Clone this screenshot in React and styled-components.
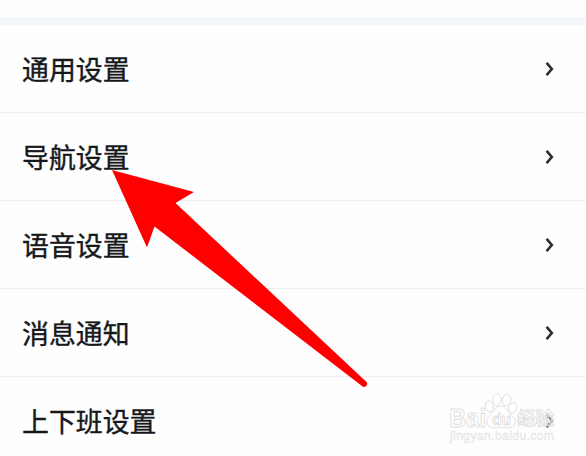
import React from 'react';
import styled, { createGlobalStyle } from 'styled-components';

const GlobalStyle = createGlobalStyle`
  body {
    margin: 0;
    background: #fefefe;
    overflow: hidden;
  }
`

const Page = styled.div`
  position: relative;
  height: 456px;
  overflow: hidden;
  font-family: "Noto Sans CJK SC", sans-serif;
`

const Band = styled.div`
  margin-top: 17px;
  height: 8px;
  background: #f5f8fb;
`

const List = styled.ul`
  margin: 0;
  padding: 0;
  list-style: none;
`

const Row = styled.li`
  display: flex;
  align-items: center;
  justify-content: space-between;
  box-sizing: border-box;
  height: 88px;
  padding: 0 32px 0 22px;
  border-bottom: 1px solid #eeeeee;
`

const Label = styled.span`
  color: #16181c;
  font-size: 26.9px;
  line-height: 40px;
  -webkit-text-stroke: 0.4px #16181c;
`

const Chevron = styled.svg`
  width: 9px;
  height: 16px;
  fill: none;
  stroke: #2b2c2e;
  stroke-width: 2.6;
`

const Pointer = styled.svg`
  position: absolute;
  top: 0;
  left: 0;
  fill: #fe0000;
`

const Watermark = styled.svg`
  position: absolute;
  left: 440px;
  top: 386px;
  fill: rgba(255, 255, 255, 0.6);
  stroke: #dedede;
  stroke-width: 0.9;
  stroke-linejoin: round;
`

const items = ['通用设置', '导航设置', '语音设置', '消息通知', '上下班设置'];

export default () => {
    return (
        <Page>
            <GlobalStyle />
            <Band />
            <List>
                {items.map(item => (
                    <Row key={item}>
                        <Label>{item}</Label>
                        <Chevron viewBox="0 0 9 16">
                            <path d="M1.6 1.8L6.8 8L1.6 14.2" />
                        </Chevron>
                    </Row>
                ))}
            </List>
            <Pointer width="586" height="456" viewBox="0 0 586 456">
                <path d="M112 170L194 192L175.500 203L366 381.500A3 3 0 0 1 362 386L154.500 226.500L147 247.500Z" />
            </Pointer>
            <Watermark width="120" height="62" viewBox="0 0 120 62">
                <g fontFamily="Liberation Sans, sans-serif" fontWeight="bold">
                    <text x="9" y="40.500" fontSize="25" textLength="37" lengthAdjust="spacingAndGlyphs">Bai</text>
                    <ellipse cx="49.500" cy="20.500" rx="4" ry="5.500" transform="rotate(-12 49.500 20.500)" />
                    <ellipse cx="57" cy="13.500" rx="4.200" ry="5.800" />
                    <ellipse cx="66.500" cy="14" rx="4.200" ry="5.800" transform="rotate(12 66.500 14)" />
                    <ellipse cx="72.500" cy="22" rx="4" ry="5.500" transform="rotate(18 72.500 22)" />
                    <path d="M61 20C55 20 54 26 50 29.500C44 35 47 42 55 42C59 41 63 41 67 42C76 42 78 35 72 30C67 26 67 20 61 20Z" />
                    <text x="52" y="38.500" fontSize="16" textLength="19" lengthAdjust="spacingAndGlyphs">du</text>
                </g>
                <text x="77" y="39" fontSize="18.500" fontWeight="bold" fontFamily="Noto Sans CJK SC, sans-serif">经验</text>
                <text x="10" y="53.500" fontSize="12" fontFamily="Liberation Sans, sans-serif" strokeWidth="0.500" textLength="104">jingyan.baidu.com</text>
            </Watermark>
        </Page>
    );
}
